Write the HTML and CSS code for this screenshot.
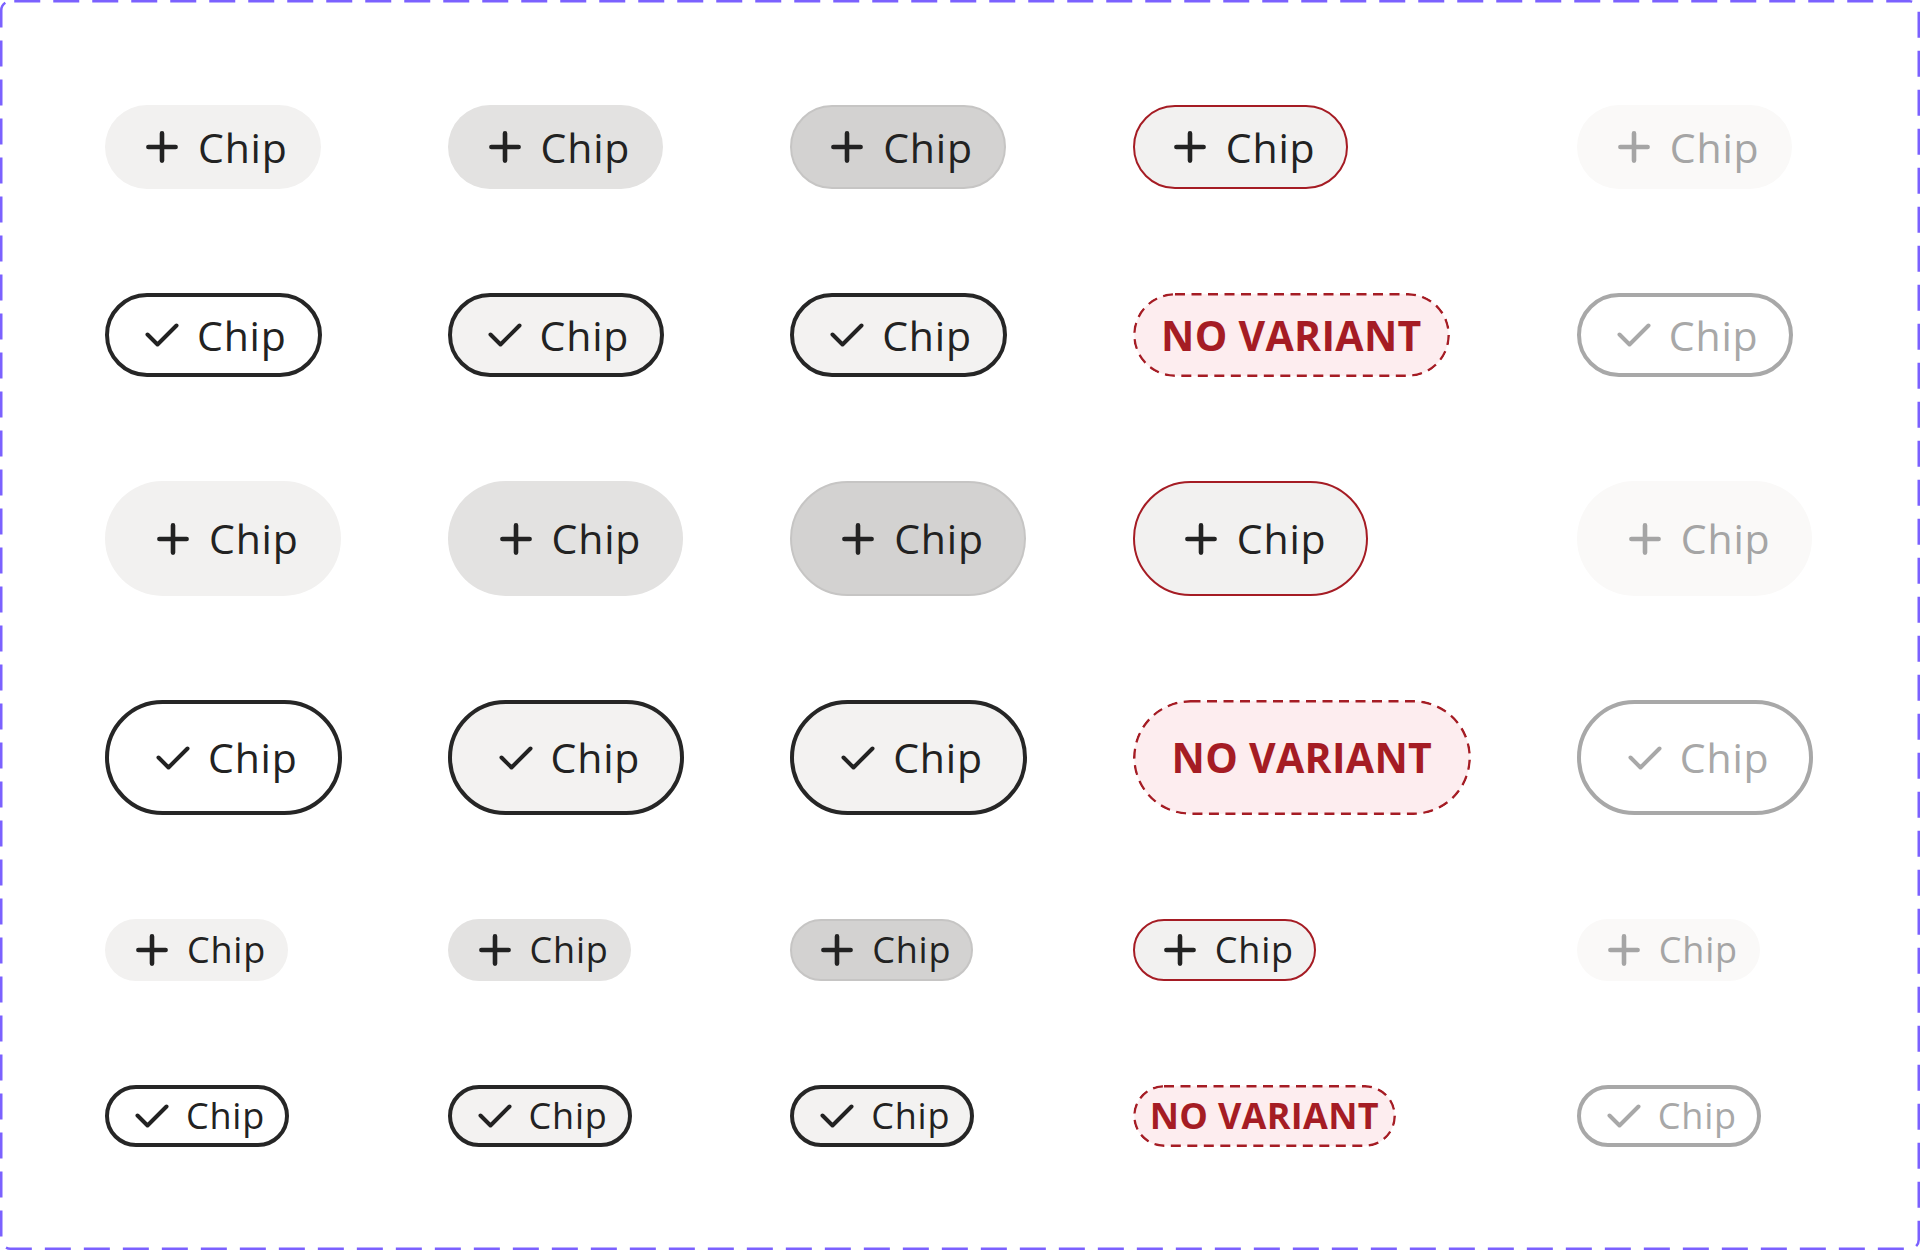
FILE: index.html
```html
<!DOCTYPE html>
<html lang="en">
<head>
<meta charset="utf-8">
<title>Chip variants</title>
<link rel="stylesheet" href="styles.css">
</head>
<body>
<svg width="0" height="0" class="defs" aria-hidden="true">
  <defs>
    <symbol id="i-plus" viewBox="0 0 32 32"><path d="M16 2.4v27.2M2.4 16h27.2" fill="none" stroke="currentColor" stroke-width="4.6" stroke-linecap="round"/></symbol>
    <symbol id="i-check" viewBox="0 0 34 24"><path d="M2.5 11.5l10 10L31.5 2.5" fill="none" stroke="currentColor" stroke-width="4" stroke-linecap="round" stroke-linejoin="round"/></symbol>
  </defs>
</svg>
<main class="frame">
  <!-- row 1: medium, add -->
  <span class="chip md add c-default"><svg class="ico plus"><use href="#i-plus"/></svg><span class="lbl">Chip</span></span>
  <span class="chip md add c-hover"><svg class="ico plus"><use href="#i-plus"/></svg><span class="lbl">Chip</span></span>
  <span class="chip md add c-active"><svg class="ico plus"><use href="#i-plus"/></svg><span class="lbl">Chip</span></span>
  <span class="chip md add c-focus"><svg class="ico plus"><use href="#i-plus"/></svg><span class="lbl">Chip</span></span>
  <span class="chip md add c-disabled"><svg class="ico plus"><use href="#i-plus"/></svg><span class="lbl">Chip</span></span>

  <!-- row 2: medium, selected -->
  <span class="chip md sel s-default"><svg class="ico check"><use href="#i-check"/></svg><span class="lbl">Chip</span></span>
  <span class="chip md sel s-hover"><svg class="ico check"><use href="#i-check"/></svg><span class="lbl">Chip</span></span>
  <span class="chip md sel s-active"><svg class="ico check"><use href="#i-check"/></svg><span class="lbl">Chip</span></span>
  <span class="chip md none">NO VARIANT</span>
  <span class="chip md sel s-disabled"><svg class="ico check"><use href="#i-check"/></svg><span class="lbl">Chip</span></span>

  <!-- row 3: large, add -->
  <span class="chip lg add c-default"><svg class="ico plus"><use href="#i-plus"/></svg><span class="lbl">Chip</span></span>
  <span class="chip lg add c-hover"><svg class="ico plus"><use href="#i-plus"/></svg><span class="lbl">Chip</span></span>
  <span class="chip lg add c-active"><svg class="ico plus"><use href="#i-plus"/></svg><span class="lbl">Chip</span></span>
  <span class="chip lg add c-focus"><svg class="ico plus"><use href="#i-plus"/></svg><span class="lbl">Chip</span></span>
  <span class="chip lg add c-disabled"><svg class="ico plus"><use href="#i-plus"/></svg><span class="lbl">Chip</span></span>

  <!-- row 4: large, selected -->
  <span class="chip lg sel s-default"><svg class="ico check"><use href="#i-check"/></svg><span class="lbl">Chip</span></span>
  <span class="chip lg sel s-hover"><svg class="ico check"><use href="#i-check"/></svg><span class="lbl">Chip</span></span>
  <span class="chip lg sel s-active"><svg class="ico check"><use href="#i-check"/></svg><span class="lbl">Chip</span></span>
  <span class="chip lg none">NO VARIANT</span>
  <span class="chip lg sel s-disabled"><svg class="ico check"><use href="#i-check"/></svg><span class="lbl">Chip</span></span>

  <!-- row 5: small, add -->
  <span class="chip sm add c-default"><svg class="ico plus"><use href="#i-plus"/></svg><span class="lbl">Chip</span></span>
  <span class="chip sm add c-hover"><svg class="ico plus"><use href="#i-plus"/></svg><span class="lbl">Chip</span></span>
  <span class="chip sm add c-active"><svg class="ico plus"><use href="#i-plus"/></svg><span class="lbl">Chip</span></span>
  <span class="chip sm add c-focus"><svg class="ico plus"><use href="#i-plus"/></svg><span class="lbl">Chip</span></span>
  <span class="chip sm add c-disabled"><svg class="ico plus"><use href="#i-plus"/></svg><span class="lbl">Chip</span></span>

  <!-- row 6: small, selected -->
  <span class="chip sm sel s-default"><svg class="ico check"><use href="#i-check"/></svg><span class="lbl">Chip</span></span>
  <span class="chip sm sel s-hover"><svg class="ico check"><use href="#i-check"/></svg><span class="lbl">Chip</span></span>
  <span class="chip sm sel s-active"><svg class="ico check"><use href="#i-check"/></svg><span class="lbl">Chip</span></span>
  <span class="chip sm none">NO VARIANT</span>
  <span class="chip sm sel s-disabled"><svg class="ico check"><use href="#i-check"/></svg><span class="lbl">Chip</span></span>
</main>
</body>
</html>
```

FILE: styles.css
```css
html, body {
  margin: 0;
  padding: 0;
  background: #ffffff;
}

.defs {
  position: absolute;
  width: 0;
  height: 0;
  overflow: hidden;
}

.frame {
  width: 1920px;
  height: 1250px;
  box-sizing: border-box;
  padding: 105px;
  display: grid;
  grid-template-columns: repeat(5, auto);
  justify-content: start;
  align-content: start;
  align-items: center;
  justify-items: start;
  column-gap: 106px;
  row-gap: 104px;
  background-image: url("data:image/svg+xml,%3Csvg xmlns='http://www.w3.org/2000/svg' width='1920' height='1250' viewBox='0 0 1920 1250'%3E%3Crect x='1.25' y='1.25' width='1917.5' height='1247.5' rx='9' fill='none' stroke='%237B61FF' stroke-width='2.5' stroke-dasharray='26 13' stroke-dashoffset='-4'/%3E%3C/svg%3E");
  background-repeat: no-repeat;
}

.chip {
  display: inline-flex;
  align-items: center;
  box-sizing: border-box;
  border-radius: 999px;
  border-style: solid;
  border-color: transparent;
  font-family: "Open Sans", "Noto Sans", sans-serif;
  color: #222222;
  white-space: nowrap;
  line-height: 1;
}

.lbl {
  letter-spacing: 0.8px;
}

.ico {
  flex: none;
  display: block;
}

.ico.plus {
  width: 32px;
  height: 32px;
}

.ico.check {
  width: 34px;
  height: 24px;
}

/* sizes */
.md {
  height: 84px;
  font-size: 41px;
  border-width: 2px;
  padding: 0 31px 0 39px;
  gap: 20px;
}

.md.sel {
  border-width: 4px;
  padding: 0 31px 0 36px;
  gap: 18px;
}

.lg {
  height: 115px;
  font-size: 41px;
  border-width: 2px;
  padding: 0 40px 0 50px;
  gap: 20px;
}

.lg.sel {
  border-width: 4px;
  padding: 0 40px 0 47px;
  gap: 18px;
}

.sm {
  height: 62px;
  font-size: 36px;
  border-width: 2px;
  padding: 0 20px 0 29px;
  gap: 19px;
}

.sm.sel {
  border-width: 4px;
  padding: 0 20px 0 26px;
  gap: 17px;
}

/* add (unselected) states */
.c-default {
  background: #f2f1f0;
}

.c-hover {
  background: #e3e2e1;
}

.c-active {
  background: #d3d2d1;
  border-color: #c6c5c4;
}

.c-focus {
  background: #f2f1f0;
  border-color: #a51c24;
}

.c-disabled {
  background: #faf9f8;
  color: #a5a5a5;
}

/* selected states */
.sel {
  border-color: #262626;
}

.s-default {
  background: #ffffff;
}

.s-hover,
.s-active {
  background: #f3f2f1;
}

.s-disabled {
  background: #ffffff;
  border-color: #a8a8a8;
  color: #a8a8a8;
}

/* no variant placeholder */
.none {
  justify-content: center;
  border: 0;
  padding: 0;
  color: #a51c24;
  font-weight: 700;
  letter-spacing: 0.3px;
  background-repeat: no-repeat;
}

.md.none {
  width: 317px;
  background-image: url("data:image/svg+xml,%3Csvg xmlns='http://www.w3.org/2000/svg' width='317' height='84'%3E%3Crect x='1.25' y='1.25' width='314.5' height='81.5' rx='40.75' fill='%23FDEDEF' stroke='%23A51C24' stroke-width='2.5' stroke-dasharray='10 6.5'/%3E%3C/svg%3E");
}

.lg.none {
  width: 338px;
  background-image: url("data:image/svg+xml,%3Csvg xmlns='http://www.w3.org/2000/svg' width='338' height='115'%3E%3Crect x='1.25' y='1.25' width='335.5' height='112.5' rx='56.25' fill='%23FDEDEF' stroke='%23A51C24' stroke-width='2.5' stroke-dasharray='10 6.5'/%3E%3C/svg%3E");
}

.sm.none {
  width: 263px;
  background-image: url("data:image/svg+xml,%3Csvg xmlns='http://www.w3.org/2000/svg' width='263' height='62'%3E%3Crect x='1.25' y='1.25' width='260.5' height='59.5' rx='29.75' fill='%23FDEDEF' stroke='%23A51C24' stroke-width='2.5' stroke-dasharray='10 6.5'/%3E%3C/svg%3E");
}
```
